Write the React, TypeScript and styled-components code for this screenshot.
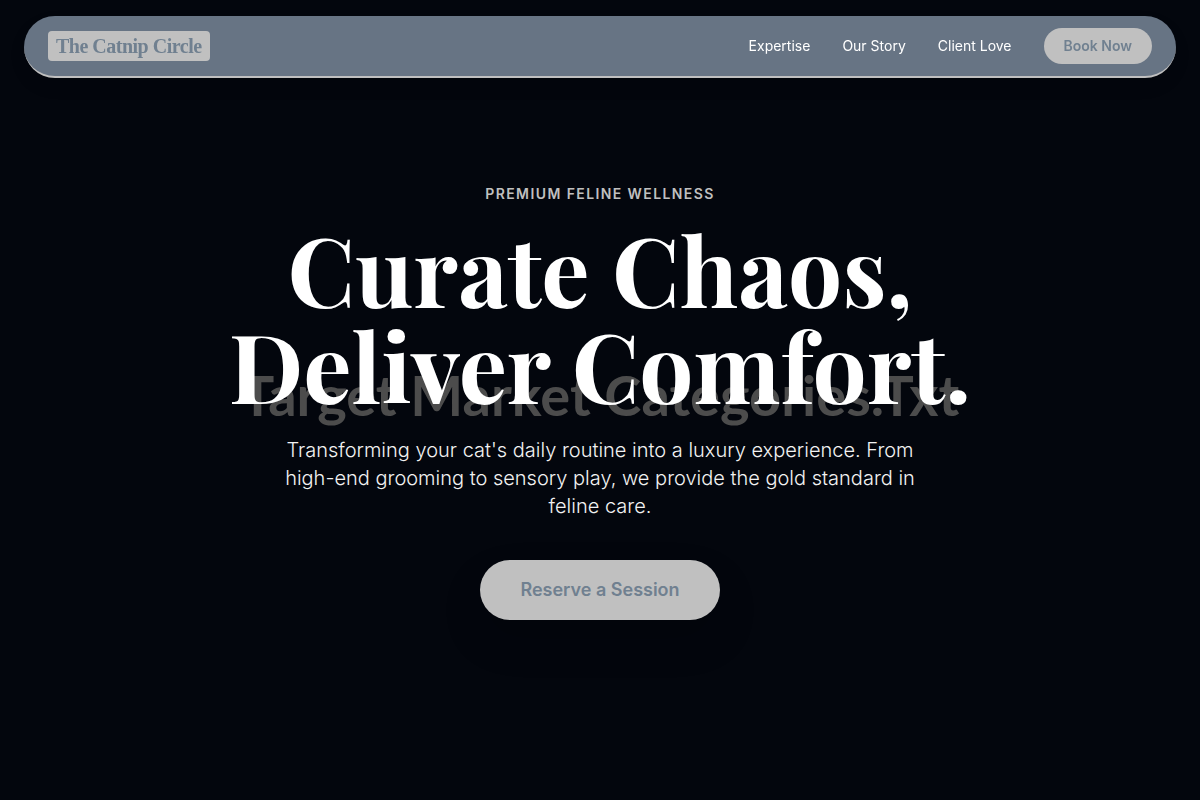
import React from "react";
import styled, { createGlobalStyle } from "styled-components";

const GlobalStyle = createGlobalStyle`
  *, *::before, *::after { box-sizing: border-box; }
  body {
    margin: 0;
    background: #03060d;
    color: #ffffff;
    font-family: Inter, "Liberation Sans", sans-serif;
  }
`;

const Page = styled.div`
  display: flex;
  flex-direction: column;
  min-height: 100vh;
`;

const Header = styled.header`
  position: fixed;
  z-index: 2;
  top: 16px;
  left: 24px;
  right: 24px;
  display: flex;
  align-items: center;
  justify-content: space-between;
  padding: 12px 24px;
  background: #677484;
  border-bottom: 2px solid #c0c0c0;
  border-radius: 32px;
  box-shadow: 0 8px 16px rgba(0, 0, 0, 0.1);
`;

const Logo = styled.a`
  padding: 0 8px;
  border-radius: 4px;
  background: #c0c0c0;
  color: #708090;
  font-family: "Liberation Serif", serif;
  font-size: 20px;
  font-weight: 700;
  line-height: 30px;
  letter-spacing: -0.025em;
  text-decoration: none;
`;

const Nav = styled.nav`
  display: flex;
  align-items: center;
  gap: 32px;
`;

const NavLink = styled.a`
  color: #ffffff;
  font-size: 14px;
  line-height: 20px;
  text-decoration: none;
`;

const PillButton = styled.button<{ $large?: boolean }>`
  border: 0;
  border-radius: 32px;
  background: #c0c0c0;
  color: #708090;
  font-family: inherit;
  font-weight: 600;
  cursor: pointer;
  font-size: ${(p) => (p.$large ? 18 : 14)}px;
  line-height: ${(p) => (p.$large ? 28 : 20)}px;
  padding: ${(p) => (p.$large ? "16px 40px" : "8px 20px")};
  box-shadow: ${(p) => (p.$large ? "0 20px 40px rgba(0, 0, 0, 0.15)" : "none")};
`;

const Hero = styled.main`
  position: relative;
  flex: 1;
  display: flex;
  align-items: center;
  justify-content: center;
  padding: 96px 24px;
`;

const Backdrop = styled.div`
  position: absolute;
  inset: 0;
  display: flex;
  align-items: center;
  justify-content: center;
  padding-bottom: 12px;
  color: #4c4c4c;
  font-family: Lato, sans-serif;
  font-size: 56px;
  font-weight: 700;
  text-align: center;
`;

const Content = styled.div`
  position: relative;
  display: flex;
  flex-direction: column;
  align-items: center;
  text-align: center;
`;

const Eyebrow = styled.p`
  margin: 0 0 12px;
  color: #c0c0c0;
  font-size: 14px;
  font-weight: 600;
  line-height: 28px;
  letter-spacing: 0.1em;
  text-transform: uppercase;
`;

const Title = styled.h1`
  margin: 0 0 24px;
  font-family: "Playfair Display", "Liberation Serif", serif;
  font-size: 96px;
  font-weight: 700;
  line-height: 96px;
`;

const Lead = styled.p`
  max-width: 672px;
  margin: 0 0 40px;
  color: #f2f2f2;
  font-size: 20px;
  font-weight: 300;
  line-height: 28px;
`;

export default function App() {
  return (
    <Page>
      <GlobalStyle />
      <Header>
        <Logo href="#top">The Catnip Circle</Logo>
        <Nav>
          <NavLink href="#expertise">Expertise</NavLink>
          <NavLink href="#story">Our Story</NavLink>
          <NavLink href="#love">Client Love</NavLink>
          <PillButton type="button">Book Now</PillButton>
        </Nav>
      </Header>
      <Hero id="top">
        <Backdrop>Target Market Categories.Txt</Backdrop>
        <Content>
          <Eyebrow>Premium Feline Wellness</Eyebrow>
          <Title>
            Curate Chaos,
            <br />
            Deliver Comfort.
          </Title>
          <Lead>
            Transforming your cat's daily routine into a luxury experience. From
            high-end grooming to sensory play, we provide the gold standard in
            feline care.
          </Lead>
          <PillButton type="button" $large>
            Reserve a Session
          </PillButton>
        </Content>
      </Hero>
    </Page>
  );
}
